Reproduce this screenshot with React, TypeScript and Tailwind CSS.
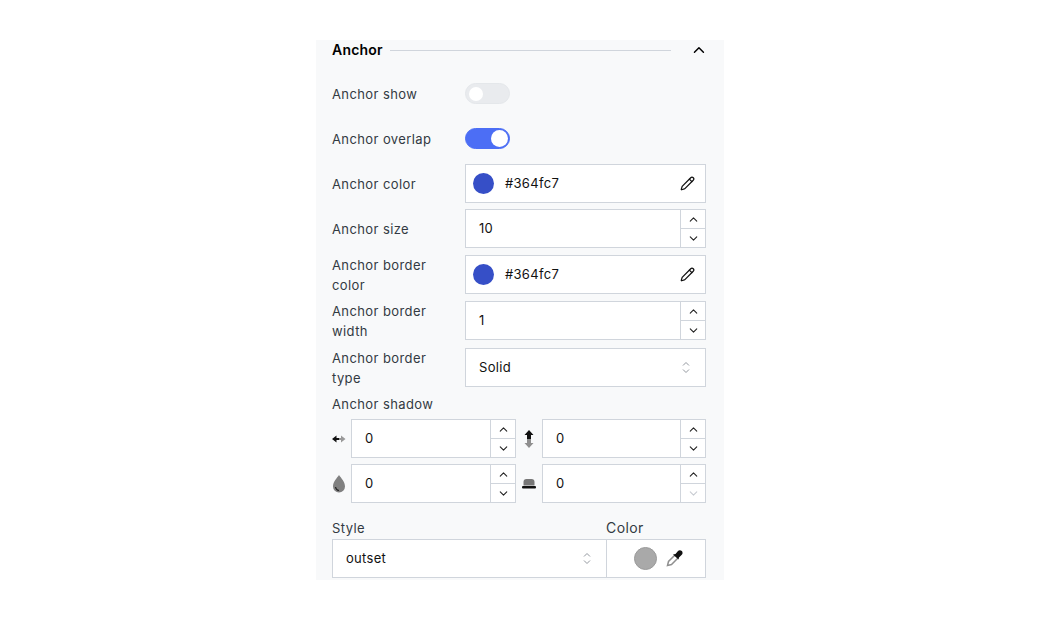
import { ChevronDown, ChevronUp, Pencil } from 'lucide-react';
import { ReactNode } from 'react';

const font = "font-['Inter','Liberation_Sans',sans-serif]";

function Toggle({ on }: { on?: boolean }) {
  return (
    <div
      className={`flex h-[21px] w-[45px] items-center rounded-full border ${
        on ? 'justify-end border-[#4c6ef5] bg-[#4c6ef5] pr-[1px]' : 'justify-start border-[#e4e7ea] bg-[#e9ebee] pl-[3px]'
      }`}
    >
      <div className={`rounded-full bg-white ${on ? 'h-[17px] w-[17px]' : 'h-[14px] w-[14px]'}`} />
    </div>
  );
}

function Stepper({ downDisabled }: { downDisabled?: boolean }) {
  return (
    <div className="flex h-full w-[25px] shrink-0 flex-col">
      <div className="flex flex-1 items-center justify-center border-b border-l border-[#d0d5dc] text-[#222]">
        <ChevronUp size={13} strokeWidth={2} />
      </div>
      <div className={`flex flex-1 items-center justify-center border-l border-[#d0d5dc] ${downDisabled ? 'text-[#c8ccd2]' : 'text-[#222]'}`}>
        <ChevronDown size={13} strokeWidth={2} />
      </div>
    </div>
  );
}

function NumberBox({ value, className, downDisabled }: { value: string; className: string; downDisabled?: boolean }) {
  return (
    <div className={`flex h-[39px] items-center border border-[#d0d5dc] bg-white ${className}`}>
      <span className="flex-1 pl-[13px] text-[13px] tracking-[0.3px] text-[#111]">{value}</span>
      <Stepper downDisabled={downDisabled} />
    </div>
  );
}

function ColorBox() {
  return (
    <div className="flex h-[39px] w-[241px] items-center border border-[#d0d5dc] bg-white pl-[7px] pr-[10px]">
      <div className="h-[21px] w-[21px] rounded-full bg-[#364fc7]" />
      <span className="ml-[11px] flex-1 text-[13px] tracking-[0.3px] text-[#111]">#364fc7</span>
      <Pencil size={15} strokeWidth={2} className="text-[#111]" />
    </div>
  );
}

function Row({ label, children, className }: { label: ReactNode; children: ReactNode; className: string }) {
  return (
    <div className={`flex items-center ${className}`}>
      <div className="-my-[2px] w-[133px] pr-[27px] text-[13px] leading-[20px] tracking-[0.4px] text-[#333a42]">{label}</div>
      {children}
    </div>
  );
}

function SortIcon() {
  return (
    <svg width="8" height="13" viewBox="0 0 8 13" fill="none" stroke="#93989f" strokeWidth="1">
      <path d="M1 4.500L4 1.500 7 4.500" />
      <path d="M1 8.500L4 11.500 7 8.500" />
    </svg>
  );
}

function Select({ value, className }: { value: string; className: string }) {
  return (
    <div className={`flex h-[39px] items-center justify-between border border-[#d0d5dc] bg-white pl-[13px] pr-[15px] ${className}`}>
      <span className="text-[13px] tracking-[0.3px] text-[#111]">{value}</span>
      <SortIcon />
    </div>
  );
}

export default function App() {
  return (
    <div className={`min-h-[620px] bg-white pt-[40px] ${font}`}>
      <div className="mx-auto h-[540px] w-[408px] overflow-hidden bg-[#f8f9fa] px-4">
        <div className="flex h-[20px] items-center">
          <span className="pb-px text-[14px] font-semibold tracking-[0.2px] text-black">Anchor</span>
          <div className="ml-[7px] h-px w-[283px] bg-[#d0d5dc]" />
          <ChevronUp size={18} strokeWidth={2} className="ml-[19px] text-black" />
        </div>

        <Row label="Anchor show" className="mt-[23px]">
          <Toggle />
        </Row>
        <Row label="Anchor overlap" className="mt-[24px]">
          <Toggle on />
        </Row>
        <Row label="Anchor color" className="mt-[15px]">
          <ColorBox />
        </Row>
        <Row label="Anchor size" className="mt-[6px]">
          <NumberBox value="10" className="w-[241px]" />
        </Row>
        <Row label="Anchor border color" className="mt-[7px]">
          <ColorBox />
        </Row>
        <Row label="Anchor border width" className="mt-[7px]">
          <NumberBox value="1" className="w-[241px]" />
        </Row>
        <Row label="Anchor border type" className="mt-[8px]">
          <Select value="Solid" className="w-[241px]" />
        </Row>

        <div className="mt-[7px] text-[13px] leading-[20px] tracking-[0.4px] text-[#333a42]">Anchor shadow</div>

        <div className="mt-[5px] flex items-center">
          <svg width="19" height="16" viewBox="0 0 19 16" className="shrink-0">
            <path d="M0 8l4.500-3.500V7H7.500v2H4.500v2.500z" fill="#111" />
            <path d="M13.500 8L9 4.500V7H7.500v2H9v2.500z" fill="#999" />
          </svg>
          <NumberBox value="0" className="w-[165px]" />
          <svg width="26" height="18" viewBox="0 0 26 18" className="shrink-0">
            <path d="M13 0l4.500 5H15v4h-4V5H8.500z" fill="#111" />
            <path d="M13 18l4.500-5H15V9h-4v4H8.500z" fill="#8f8f8f" />
          </svg>
          <NumberBox value="0" className="w-[164px]" />
        </div>

        <div className="mt-[6px] flex items-center">
          <svg width="19" height="18" viewBox="0 0 19 18" className="shrink-0">
            <path d="M7 0c2 3 6 6.500 6 11.500a6 6 0 0 1-12 0C1 6.500 5 3 7 0z" fill="#808080" />
            <path d="M3.500 12c.3 2 1.500 3.300 3.500 3.500" fill="none" stroke="#222" strokeWidth="1.200" />
          </svg>
          <NumberBox value="0" className="w-[165px]" />
          <svg width="26" height="14" viewBox="0 0 26 14" className="shrink-0">
            <path d="M7.500 8.500V5c0-2 1-3 3-3h5c2 0 3 1 3 3v3.500z" fill="#777" />
            <rect x="6" y="9" width="14" height="2.500" rx="1" fill="#111" />
          </svg>
          <NumberBox value="0" className="w-[164px]" downDisabled />
        </div>

        <div className="mt-[15px] flex">
          <div className="w-[274px] text-[13px] leading-[20px] tracking-[0.4px] text-[#333a42]">Style</div>
          <div className="text-[14px] leading-[20px] tracking-[0.4px] text-[#333a42]">Color</div>
        </div>
        <div className="mt-[1px] flex">
          <Select value="outset" className="w-[275px]" />
          <div className="flex h-[39px] w-[99px] items-center justify-center gap-[9px] border border-l-0 border-[#d0d5dc] bg-white pl-[4px]">
            <div className="h-[23px] w-[23px] rounded-full border border-[#9a9a9a] bg-[#a9a9a9]" />
            <svg width="17" height="17" viewBox="0 0 17 17">
              <path d="M9 5L2.500 11.500 1.500 15.500 5.500 14.500 12 8" fill="#fff" stroke="#909090" strokeWidth="1.500" />
              <path d="M7 4.500l2.500-.5L12 1c1-1 2.800-1 3.800 0s1 2.800 0 3.800L13 7.500l-.5 2z" fill="#111" />
            </svg>
          </div>
        </div>
      </div>
    </div>
  );
}
